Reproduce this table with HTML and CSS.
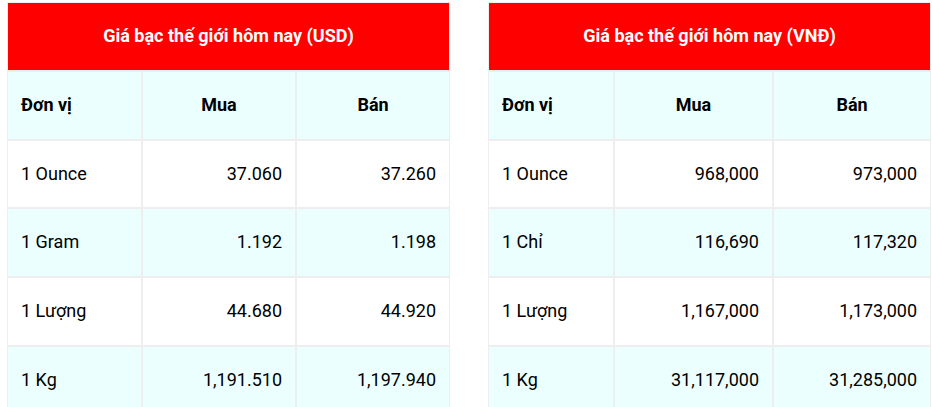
FILE: index.html
```html
<!DOCTYPE html>
<html lang="vi">
<head>
<meta charset="utf-8">
<link rel="stylesheet" href="styles.css">
</head>
<body>
<div class="wrap">
  <table class="price usd">
    <colgroup><col class="k1"><col class="k2"><col class="k3"></colgroup>
    <thead>
      <tr><th class="title" colspan="3">Giá bạc thế giới hôm nay (USD)</th></tr>
    </thead>
    <tbody>
      <tr class="alt head"><td>Đơn vị</td><td class="ctr">Mua</td><td class="ctr">Bán</td></tr>
      <tr><td>1 Ounce</td><td class="num">37.060</td><td class="num">37.260</td></tr>
      <tr class="alt"><td>1 Gram</td><td class="num">1.192</td><td class="num">1.198</td></tr>
      <tr><td>1 Lượng</td><td class="num">44.680</td><td class="num">44.920</td></tr>
      <tr class="alt"><td>1 Kg</td><td class="num">1,191.510</td><td class="num">1,197.940</td></tr>
    </tbody>
  </table>
  <table class="price vnd">
    <colgroup><col class="k1"><col class="k2"><col class="k3"></colgroup>
    <thead>
      <tr><th class="title" colspan="3">Giá bạc thế giới hôm nay (VNĐ)</th></tr>
    </thead>
    <tbody>
      <tr class="alt head"><td>Đơn vị</td><td class="ctr">Mua</td><td class="ctr">Bán</td></tr>
      <tr><td>1 Ounce</td><td class="num">968,000</td><td class="num">973,000</td></tr>
      <tr class="alt"><td>1 Chỉ</td><td class="num">116,690</td><td class="num">117,320</td></tr>
      <tr><td>1 Lượng</td><td class="num">1,167,000</td><td class="num">1,173,000</td></tr>
      <tr class="alt"><td>1 Kg</td><td class="num">31,117,000</td><td class="num">31,285,000</td></tr>
    </tbody>
  </table>
</div>
</body>
</html>
```
FILE: styles.css
```css
html, body {
  margin: 0;
  padding: 0;
  background: #ffffff;
}
body {
  font-family: Roboto, "Liberation Sans", Arial, sans-serif;
  color: #000;
}
.wrap {
  display: flex;
  gap: 38px;
  padding: 2px 0 0 7px;
  align-items: flex-start;
}
.price {
  border-collapse: separate;
  border-spacing: 0;
  border: 1px solid #eeeeee;
  width: 443px;
  table-layout: fixed;
  font-size: 18px;
  line-height: 21px;
}
.price th,
.price td {
  padding: 22px 13px 24px;
  vertical-align: middle;
  text-align: left;
}
.price tbody td {
  padding-bottom: 23.7px;
}
.price .title {
  background: #ff0000;
  color: #fff;
  font-weight: 700;
  text-align: center;
}
.price tbody tr td {
  border-top: 2px solid #eeeeee;
  background: #fff;
}
.price tbody tr.alt td {
  background: #ebffff;
}
.price td + td {
  border-left: 2px solid #eeeeee;
}
.price .head td {
  font-weight: 700;
}
.price .ctr { text-align: center; }
.price .num { text-align: right; }
.usd .k1 { width: 133px; }
.usd .k2 { width: 154px; }
.usd .k3 { width: 154px; }
.vnd .k1 { width: 124px; }
.vnd .k2 { width: 159px; }
.vnd .k3 { width: 158px; }
```
